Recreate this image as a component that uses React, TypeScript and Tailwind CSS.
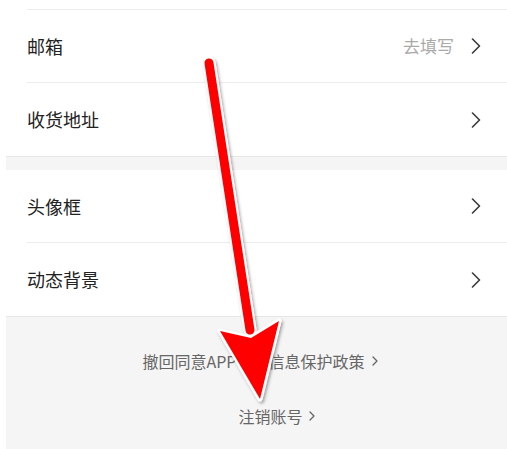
import React from 'react';

const FONT = { fontFamily: '"Noto Sans CJK SC", "Noto Sans", sans-serif' };

function Chevron() {
  return (
    <svg width="10" height="16" viewBox="0 0 10 16" fill="none">
      <path d="M1.5 1 L8.5 8 L1.5 15" stroke="#3a3a3a" strokeWidth="1.6" strokeLinecap="round" strokeLinejoin="round" />
    </svg>
  );
}

function SmallChevron() {
  return (
    <svg width="6" height="10" viewBox="0 0 6 10" fill="none">
      <path d="M1 1 L5 5 L1 9" stroke="#666" strokeWidth="1.3" strokeLinecap="round" strokeLinejoin="round" />
    </svg>
  );
}

function Row({ label, value, last }: { label: string; value?: string; last?: boolean }) {
  return (
    <div
      className={`flex h-[73px] items-center justify-between pr-[26px] ${
        last ? '' : 'border-b border-[#ececec]'
      }`}
    >
      <span className="text-[18px] text-[#222]">{label}</span>
      <div className="flex items-center gap-[17px]">
        {value && <span className="text-[17px] text-[#aaa]">{value}</span>}
        <Chevron />
      </div>
    </div>
  );
}

// Red annotation arrow drawn over the page
function Arrow() {
  return (
    <svg className="pointer-events-none absolute left-0 top-0" width="507" height="449" viewBox="0 0 507 449">
      <defs>
        <filter id="sh" x="-20%" y="-20%" width="140%" height="140%">
          <feDropShadow dx="1.5" dy="2" stdDeviation="1.5" floodColor="#000" floodOpacity="0.35" />
        </filter>
      </defs>
      <g filter="url(#sh)">
        <line x1="209" y1="63" x2="250" y2="330" stroke="#fff" strokeWidth="13" strokeLinecap="round" />
        <polygon points="260,399 220,331 251,338 279,321" fill="#fff" stroke="#fff" strokeWidth="5" strokeLinejoin="round" />
      </g>
      <line x1="209" y1="63" x2="250" y2="330" stroke="#f00" strokeWidth="9" strokeLinecap="round" />
      <polygon points="260,399 220,331 251,338 279,321" fill="#f00" />
    </svg>
  );
}

export default function App() {
  return (
    <div className="relative h-[449px] w-[507px] overflow-hidden bg-white pl-[6px]" style={FONT}>
      <div className="flex h-full flex-col bg-[#f5f5f5]">
        {/* First group */}
        <div className="border-b border-[#e6e6e6] bg-white pl-[21px]">
          <div className="h-[10px] border-b border-[#ececec]" />
          <Row label="邮箱" value="去填写" />
          <Row label="收货地址" last />
        </div>

        <div className="h-[13px]" />

        {/* Second group */}
        <div className="border-b border-[#e6e6e6] bg-white pl-[21px]">
          <Row label="头像框" />
          <Row label="动态背景" last />
        </div>

        {/* Footer links */}
        <div className="flex flex-1 flex-col items-center pt-[32px] text-[16px] text-[#666]">
          <div className="ml-[7px] flex items-center gap-[7px]">
            <span>撤回同意APP个人信息保护政策</span>
            <SmallChevron />
          </div>
          <div className="ml-[40px] mt-[31px] flex items-center gap-[6px]">
            <span>注销账号</span>
            <SmallChevron />
          </div>
        </div>
      </div>
      <Arrow />
    </div>
  );
}
